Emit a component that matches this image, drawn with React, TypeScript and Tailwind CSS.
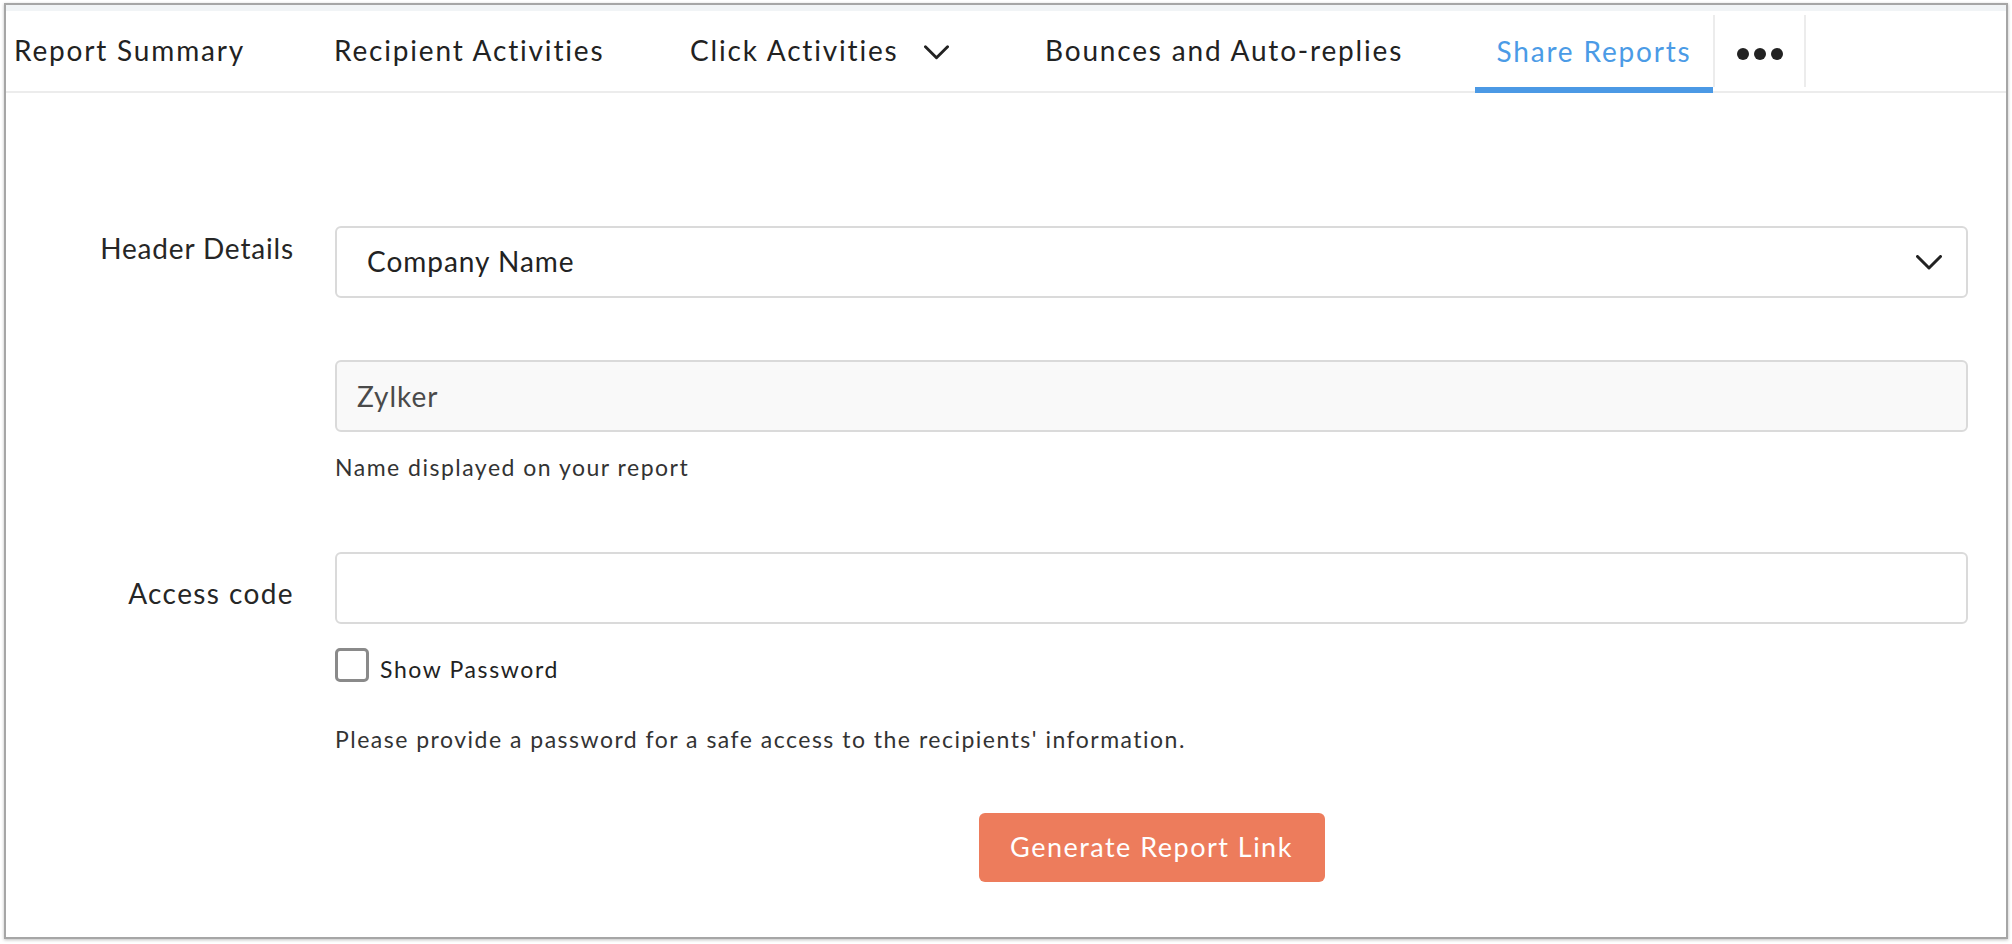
import React from "react";

const font = { fontFamily: "Lato, 'Noto Sans', sans-serif" };

function Chevron({ className }: { className?: string }) {
  return (
    <svg viewBox="0 0 26 15" className={className} fill="none">
      <path d="M1.5 1.5 L13 13 L24.5 1.5" stroke="#222" strokeWidth="3" strokeLinecap="round" strokeLinejoin="round" />
    </svg>
  );
}

export default function App() {
  return (
    <div className="w-[2012px] h-[944px] bg-white pt-[3px] pl-[4px]" style={font}>
      <div className="w-[2004px] h-[936px] border-2 border-[#a6a6a6] shadow-[0_1px_3px_rgba(0,0,0,0.25)] bg-white flex flex-col">
        <div className="h-[6px] bg-[#f1f4f6]"></div>

        {/* tabs */}
        <div className="h-[82px] border-b-2 border-[#ececec] flex items-stretch pl-[8px] text-[28px] text-[#222] tracking-[0.065em]">
          <div className="w-[320px] flex items-center pb-[2px]">Report Summary</div>
          <div className="w-[356px] flex items-center pb-[2px]">Recipient Activities</div>
          <div className="w-[355px] flex items-center pb-[2px]">
            Click Activities
            <Chevron className="w-[25px] h-[15px] ml-[25px] mt-[4px]" />
          </div>
          <div className="w-[430px] flex items-center pb-[2px]">Bounces and Auto-replies</div>
          <div className="w-[238px] flex items-center justify-center text-[#4b9be6] border-b-[6px] border-[#4b99e5] mb-[-2px] pt-[4px]">
            Share Reports
          </div>
          <div className="w-[93px] my-[4px] border-x-2 border-[#ececec] flex items-center justify-center gap-[5px] pt-[6px]">
            <span className="w-[12px] h-[12px] rounded-full bg-[#222]"></span>
            <span className="w-[12px] h-[12px] rounded-full bg-[#222]"></span>
            <span className="w-[12px] h-[12px] rounded-full bg-[#222]"></span>
          </div>
        </div>

        {/* form */}
        <div className="pt-[133px] pl-[28px]">
          <div className="flex gap-[41px]">
            <div className="w-[260px] text-right text-[28px] leading-[36px] text-[#262626] tracking-[0.03em] pt-[4px]">
              Header Details
            </div>
            <div className="w-[1633px] flex flex-col">
              <div className="h-[72px] border-2 border-[#dadada] rounded-[6px] bg-white flex items-center justify-between pl-[30px] pr-[24px] text-[28px] text-[#222] tracking-[0.035em]">
                <span className="mb-[2px]">Company Name</span>
                <Chevron className="w-[26px] h-[15px]" />
              </div>
              <div className="mt-[62px] h-[72px] border-2 border-[#dadada] rounded-[6px] bg-[#f9f9f9] flex items-center pl-[20px] text-[28px] text-[#4a4a4a] tracking-[0.035em]">
                Zylker
              </div>
              <div className="mt-[20px] text-[23px] leading-[30px] text-[#333] tracking-[0.065em]">
                Name displayed on your report
              </div>
            </div>
          </div>

          <div className="flex gap-[41px] mt-[70px]">
            <div className="w-[260px] text-right text-[28px] leading-[36px] text-[#262626] tracking-[0.05em] pt-[23px]">
              Access code
            </div>
            <div className="w-[1633px] flex flex-col">
              <div className="h-[72px] border-2 border-[#dadada] rounded-[6px] bg-white"></div>
              <div className="mt-[22px] flex items-center">
                <span className="w-[34px] h-[34px] border-[3px] border-[#8a8a8a] rounded-[5px] bg-white"></span>
                <span className="ml-[11px] mt-[8px] text-[23px] leading-[30px] text-[#222] tracking-[0.07em]">Show Password</span>
              </div>
              <div className="mt-[40px] text-[23px] leading-[30px] text-[#333] tracking-[0.065em]">
                Please provide a password for a safe access to the recipients' information.
              </div>
              <div className="mt-[59px] flex justify-center">
                <button className="w-[346px] h-[69px] rounded-[6px] bg-[#ed7c5c] text-white text-[27px] tracking-[0.055em]">
                  Generate Report Link
                </button>
              </div>
            </div>
          </div>
        </div>
      </div>
    </div>
  );
}
